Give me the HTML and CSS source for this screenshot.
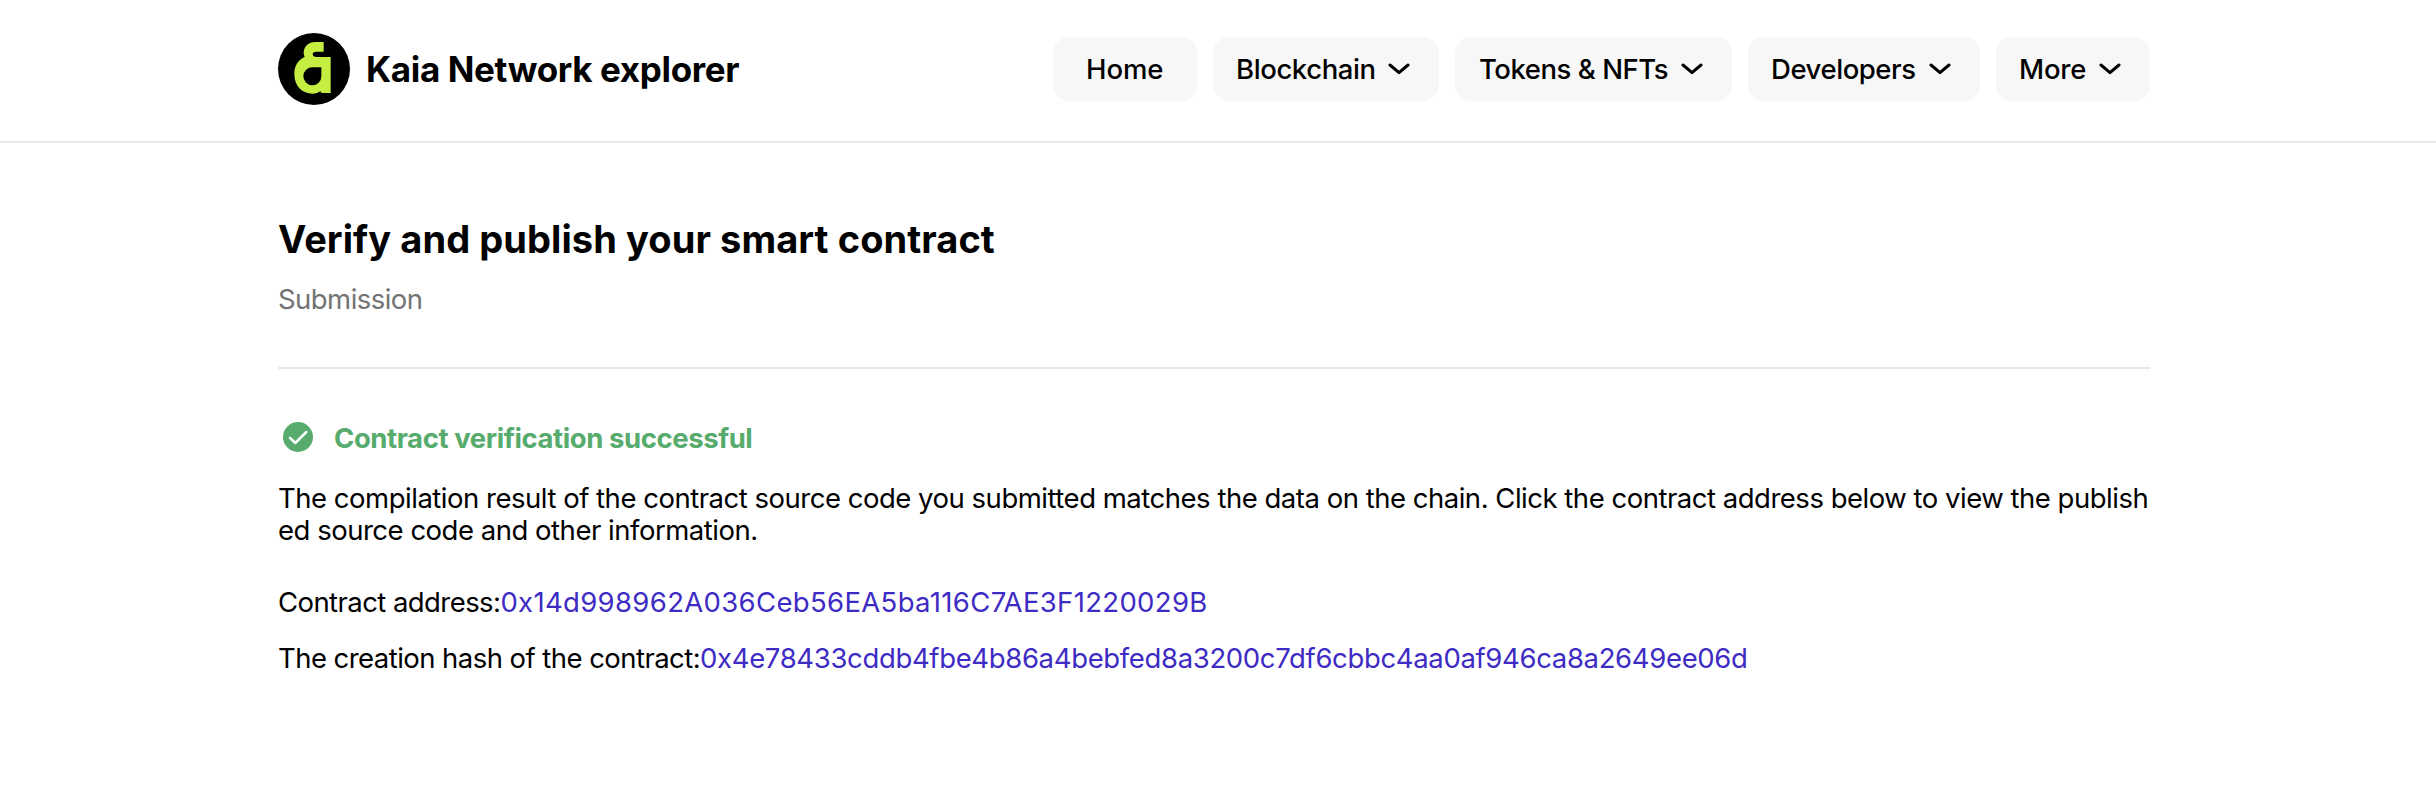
FILE: index.html
```html
<!DOCTYPE html>
<html lang="en">
<head>
<meta charset="utf-8">
<title>Kaia Network explorer</title>
<link rel="stylesheet" href="styles.css">
</head>
<body>
<header class="header">
  <div class="container header-inner">
    <a class="brand">
      <svg class="logo" viewBox="0 0 216 216"><circle cx="108" cy="108" r="108" fill="#000"/><path fill="#c4ef42" d="M137 27H112C91 27 78 40 77 58C77 64 78 67 80 72C60 80 49 99 49 123C49 160 73 182 104 182C113 182 120 180 127 175L131 180H158V72H117C108 72 104 69 104 64C104 59 108 56 114 56H137Z"/><path d="M130 103H104A27 27 0 1 0 130 130Z"/></svg>
      <span class="brand-name">Kaia Network explorer</span>
    </a>
    <nav class="nav">
      <a class="pill pill-home">Home</a>
      <a class="pill pill-blockchain">Blockchain<svg class="chev" viewBox="0 0 22 12"><path d="M2 2l9 7.6L20 2"/></svg></a>
      <a class="pill pill-tokens">Tokens &amp; NFTs<svg class="chev" viewBox="0 0 22 12"><path d="M2 2l9 7.6L20 2"/></svg></a>
      <a class="pill pill-developers">Developers<svg class="chev" viewBox="0 0 22 12"><path d="M2 2l9 7.6L20 2"/></svg></a>
      <a class="pill pill-more">More<svg class="chev" viewBox="0 0 22 12"><path d="M2 2l9 7.6L20 2"/></svg></a>
    </nav>
  </div>
</header>
<main class="container">
  <div class="heading">
    <h1 class="title">Verify and publish your smart contract</h1>
    <p class="subtitle">Submission</p>
  </div>
  <div class="status"><svg class="check" viewBox="0 0 30 30"><circle cx="15" cy="15" r="15"/><path d="M7 15.8l5.3 5.2L23.3 10"/></svg><span>Contract verification successful</span></div>
  <p class="text">The compilation result of the contract source code you submitted matches the data on the chain. Click the contract address below to view the publish<br>ed source code and other information.</p>
  <p class="row"><span class="label-address">Contract address:</span><a class="link link-address">0x14d998962A036Ceb56EA5ba116C7AE3F1220029B</a></p>
  <p class="row"><span class="label-hash">The creation hash of the contract:</span><a class="link link-hash">0x4e78433cddb4fbe4b86a4bebfed8a3200c7df6cbbc4aa0af946ca8a2649ee06d</a></p>
</main>
</body>
</html>
```

FILE: styles.css
```css
* { box-sizing: border-box; }
body { margin: 0; background: #fff; color: #000; font: 400 27.5px/32px Inter, "Liberation Sans", sans-serif; }
h1, p { margin: 0; }
.container { width: 1872px; margin-left: 278px; }
.header { border-bottom: 2px solid #e9e9e9; }
.header-inner { height: 141px; padding: 33px 0 36px; display: flex; align-items: center; justify-content: space-between; }
.brand { display: flex; align-items: center; gap: 16px; }
.logo { width: 72px; height: 72px; }
.brand-name { font-size: 35px; line-height: 40px; font-weight: 700; letter-spacing: -0.36px; white-space: nowrap; }
.nav { display: flex; gap: 16px; }
.pill { height: 64px; display: flex; align-items: center; justify-content: space-between; padding: 0 29px 0 23px; border-radius: 16px; background: #f7f7f7; font-weight: 500; white-space: nowrap; }
.pill-home { width: 144px; padding: 0 31px 0 33px; letter-spacing: -0.1px; }
.pill-blockchain { width: 226px; letter-spacing: -0.4px; }
.pill-tokens { width: 277px; padding-left: 24px; letter-spacing: -0.45px; }
.pill-developers { width: 232px; letter-spacing: -0.44px; }
.pill-more { width: 154px; letter-spacing: -0.2px; }
.chev { width: 22px; height: 12px; flex: none; fill: none; stroke: #000; stroke-width: 3; stroke-linecap: round; stroke-linejoin: round; }
.heading { padding: 72px 0 52px; border-bottom: 2px solid #e9e9e9; }
.title { font-size: 38px; line-height: 48px; font-weight: 700; letter-spacing: 0.08px; }
.subtitle { margin-top: 20px; color: #737373; letter-spacing: -0.55px; }
.status { margin-top: 53px; display: flex; align-items: center; padding-left: 5px; gap: 21px; font-weight: 700; color: #56ab6d; letter-spacing: -0.42px; }
.check { width: 30px; height: 30px; margin-top: -2px; fill: #56ab6d; }
.check path { fill: none; stroke: #fff; stroke-width: 2.5; stroke-linecap: round; stroke-linejoin: round; }
.text { margin: 28px 0 40px; letter-spacing: -0.485px; white-space: nowrap; }
.row { margin-bottom: 24px; white-space: nowrap; }
.label-address { letter-spacing: -0.57px; }
.label-hash { letter-spacing: -0.55px; }
.link { color: #3e2bc4; }
.link-address { letter-spacing: 0.34px; }
.link-hash { letter-spacing: -0.345px; }
```
